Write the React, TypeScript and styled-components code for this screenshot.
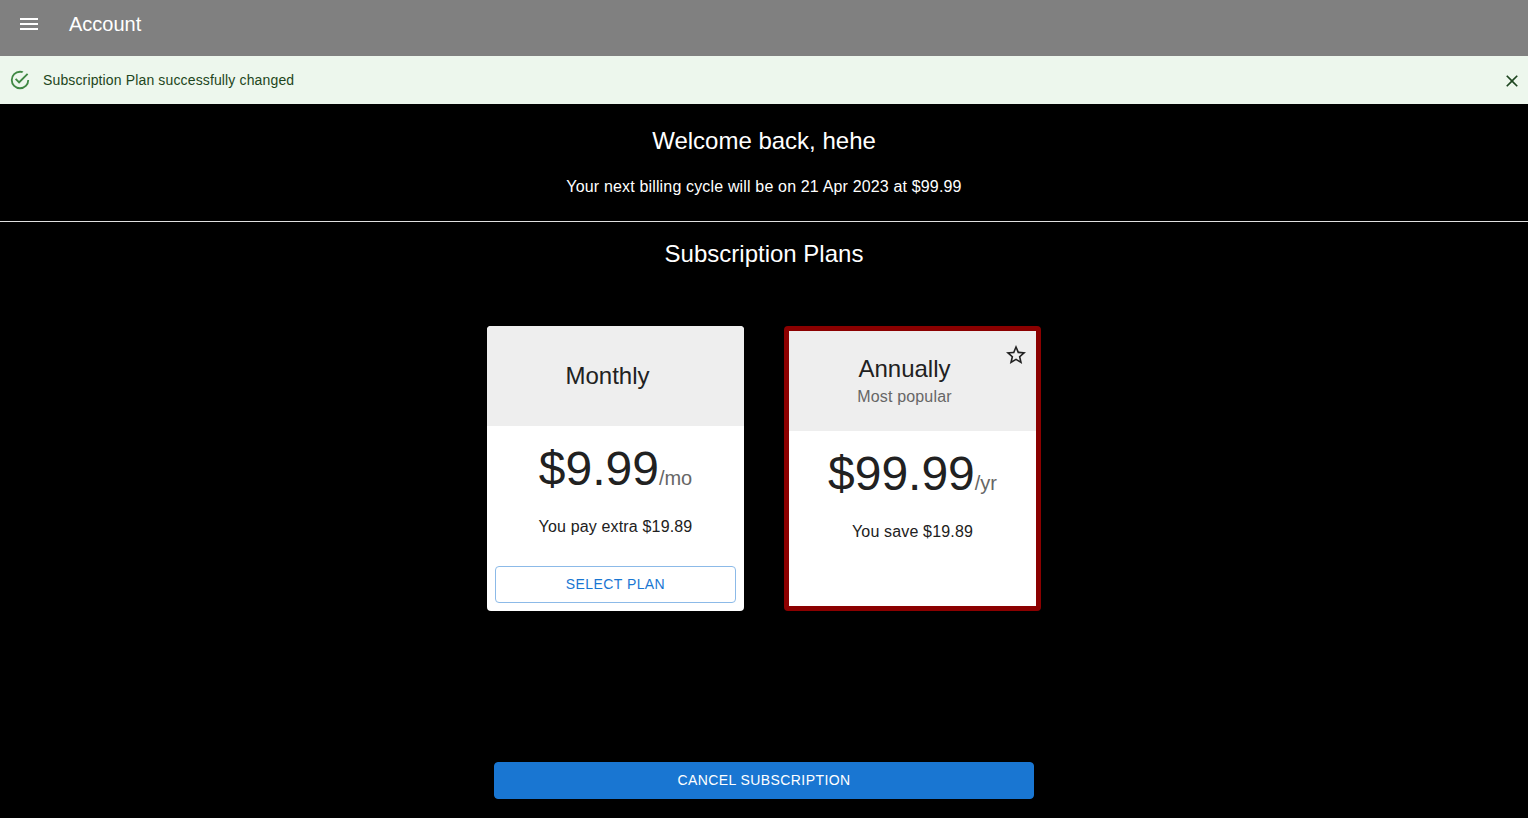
import React from "react";
import styled, { createGlobalStyle } from "styled-components";

const GlobalStyle = createGlobalStyle`
  *, *::before, *::after { box-sizing: border-box; }
  body {
    margin: 0;
    background: #000;
    color: #fff;
    font-family: "Liberation Sans", Arial, Helvetica, sans-serif;
    font-size: 16px;
    line-height: 24px;
  }
  h1, h2, h3, p { margin: 0; font-weight: 400; }
  button { font-family: inherit; cursor: pointer; }
`;

const AppBar = styled.header`
  display: flex;
  align-items: flex-start;
  gap: 16px;
  height: 56px;
  padding-left: 5px;
  background: #808080;
`;

const IconButton = styled.button<{ $pad: number }>`
  display: flex;
  padding: ${(p) => p.$pad}px;
  border: 0;
  border-radius: 50%;
  background: transparent;
  color: inherit;
`;

const Icon = styled.svg<{ $size: number }>`
  display: block;
  flex: none;
  width: ${(p) => p.$size}px;
  height: ${(p) => p.$size}px;
  fill: currentColor;
`;

const AppTitle = styled.h1`
  font-size: 20px;
  line-height: 48px;
`;

const Alert = styled.div`
  display: flex;
  align-items: center;
  gap: 12px;
  min-height: 48px;
  padding: 0 1px 0 9px;
  background: #edf7ed;
  color: #1e4620;
`;

const AlertIcon = styled.span`
  color: #2e7d32;
  opacity: 0.9;
`;

const AlertText = styled.p`
  flex: 1;
  font-size: 14px;
  line-height: 20px;
  letter-spacing: 0.01em;
`;

const AlertAction = styled.div`
  padding-top: 2px;
`;

const BodyText = styled.p<{ $muted?: boolean }>`
  color: ${(p) => (p.$muted ? "#666" : "inherit")};
  letter-spacing: 0.01em;
`;

const Welcome = styled.section`
  display: flex;
  flex-direction: column;
  gap: 18px;
  padding: 21px 16px 22px;
  border-bottom: 1px solid #e0e0e0;
  text-align: center;
`;

const Heading = styled.h2`
  font-size: 24px;
  line-height: 32px;
`;

const Plans = styled.section`
  display: flex;
  flex-direction: column;
  align-items: center;
  padding: 16px 16px 0;
  text-align: center;
`;

const PlanList = styled.div`
  display: grid;
  grid-template-columns: repeat(2, minmax(0, 257px));
  justify-content: center;
  gap: 40px;
  width: 100%;
  margin-top: 56px;

  @media (max-width: 520px) {
    grid-template-columns: minmax(0, 257px);
  }
`;

const Card = styled.article<{ $current: boolean }>`
  display: flex;
  flex-direction: column;
  overflow: hidden;
  border: ${(p) => (p.$current ? "5px solid #8b0000" : "0")};
  border-radius: 4px;
  background: #fff;
  color: #212121;
`;

const CardHeader = styled.header`
  display: flex;
  align-items: center;
  min-height: 100px;
  padding: 12px 8px 16px 16px;
  background: #eee;
`;

const CardTitles = styled.div`
  flex: 1;
  padding-top: 4px;
`;

const CardAction = styled.span`
  align-self: flex-start;
  width: 24px;
  height: 24px;
`;

const CardBody = styled.div`
  flex: 1;
  padding: 15px 16px 19px;
`;

const Price = styled.p`
  margin-bottom: 18px;
  font-size: 48px;
  line-height: 56px;
`;

const Period = styled.span`
  color: #666;
  font-size: 20px;
  line-height: 24px;
`;

const CardFooter = styled.footer`
  padding: 8px;
`;

const Button = styled.button<{ $filled?: boolean }>`
  display: block;
  width: 100%;
  padding: 5px 16px 6px;
  border: 1px solid ${(p) => (p.$filled ? "#1976d2" : "#8cbae8")};
  border-radius: 4px;
  background: ${(p) => (p.$filled ? "#1976d2" : "transparent")};
  color: ${(p) => (p.$filled ? "#fff" : "#1976d2")};
  font-size: 14px;
  line-height: 24px;
  letter-spacing: 0.03em;
  text-transform: uppercase;
`;

const CancelArea = styled.div`
  width: 100%;
  max-width: 540px;
  margin: 151px auto 19px;
`;

type Plan = {
  name: string;
  tagline?: string;
  price: string;
  period: string;
  note: string;
  current: boolean;
};

const plans: Plan[] = [
  { name: "Monthly", price: "$9.99", period: "/mo", note: "You pay extra $19.89", current: false },
  { name: "Annually", tagline: "Most popular", price: "$99.99", period: "/yr", note: "You save $19.89", current: true },
];

const icons = {
  menu: "M3 18h18v-2H3v2zm0-5h18v-2H3v2zm0-7v2h18V6H3z",
  check:
    "M20,12A8,8 0 0,1 12,20A8,8 0 0,1 4,12A8,8 0 0,1 12,4C12.76,4 13.5,4.11 14.2, 4.31L15.77,2.74C14.61,2.26 13.34,2 12,2A10,10 0 0,0 2,12A10,10 0 0,0 12,22A10,10 0 0, 0 22,12M7.91,10.08L6.5,11.5L11,16L21,6L19.59,4.58L11,13.17L7.91,10.08Z",
  close:
    "M19 6.41L17.59 5 12 10.59 6.41 5 5 6.41 10.59 12 5 17.59 6.41 19 12 13.41 17.59 19 19 17.59 13.41 12z",
  star:
    "M22 9.24l-7.19-.62L12 2 9.19 8.63 2 9.24l5.46 4.73L5.82 21 12 17.27 18.18 21l-1.63-7.03L22 9.24zM12 15.4l-3.76 2.27 1-4.28-3.32-2.88 4.38-.38L12 6.1l1.71 4.04 4.38.38-3.32 2.88 1 4.28L12 15.4z",
};

const Glyph = ({ name, size }: { name: keyof typeof icons; size: number }) => (
  <Icon $size={size} viewBox="0 0 24 24" aria-hidden="true">
    <path d={icons[name]} />
  </Icon>
);

const PlanCard = ({ plan }: { plan: Plan }) => (
  <Card $current={plan.current}>
    <CardHeader>
      <CardTitles>
        <Heading as="h3">{plan.name}</Heading>
        {plan.tagline && <BodyText $muted>{plan.tagline}</BodyText>}
      </CardTitles>
      <CardAction>{plan.current && <Glyph name="star" size={24} />}</CardAction>
    </CardHeader>
    <CardBody>
      <Price>
        {plan.price}
        <Period>{plan.period}</Period>
      </Price>
      <BodyText>{plan.note}</BodyText>
    </CardBody>
    {!plan.current && (
      <CardFooter>
        <Button type="button">Select plan</Button>
      </CardFooter>
    )}
  </Card>
);

export default function App() {
  return (
    <>
      <GlobalStyle />
      <AppBar>
        <IconButton type="button" $pad={12} aria-label="Open menu">
          <Glyph name="menu" size={24} />
        </IconButton>
        <AppTitle>Account</AppTitle>
      </AppBar>
      <Alert role="alert">
        <AlertIcon>
          <Glyph name="check" size={22} />
        </AlertIcon>
        <AlertText>Subscription Plan successfully changed</AlertText>
        <AlertAction>
          <IconButton type="button" $pad={5} aria-label="Close">
            <Glyph name="close" size={20} />
          </IconButton>
        </AlertAction>
      </Alert>
      <main>
        <Welcome>
          <Heading>Welcome back, hehe</Heading>
          <BodyText>Your next billing cycle will be on 21 Apr 2023 at $99.99</BodyText>
        </Welcome>
        <Plans>
          <Heading>Subscription Plans</Heading>
          <PlanList>
            {plans.map((plan) => (
              <PlanCard key={plan.name} plan={plan} />
            ))}
          </PlanList>
        </Plans>
        <CancelArea>
          <Button type="button" $filled>
            Cancel subscription
          </Button>
        </CancelArea>
      </main>
    </>
  );
}
